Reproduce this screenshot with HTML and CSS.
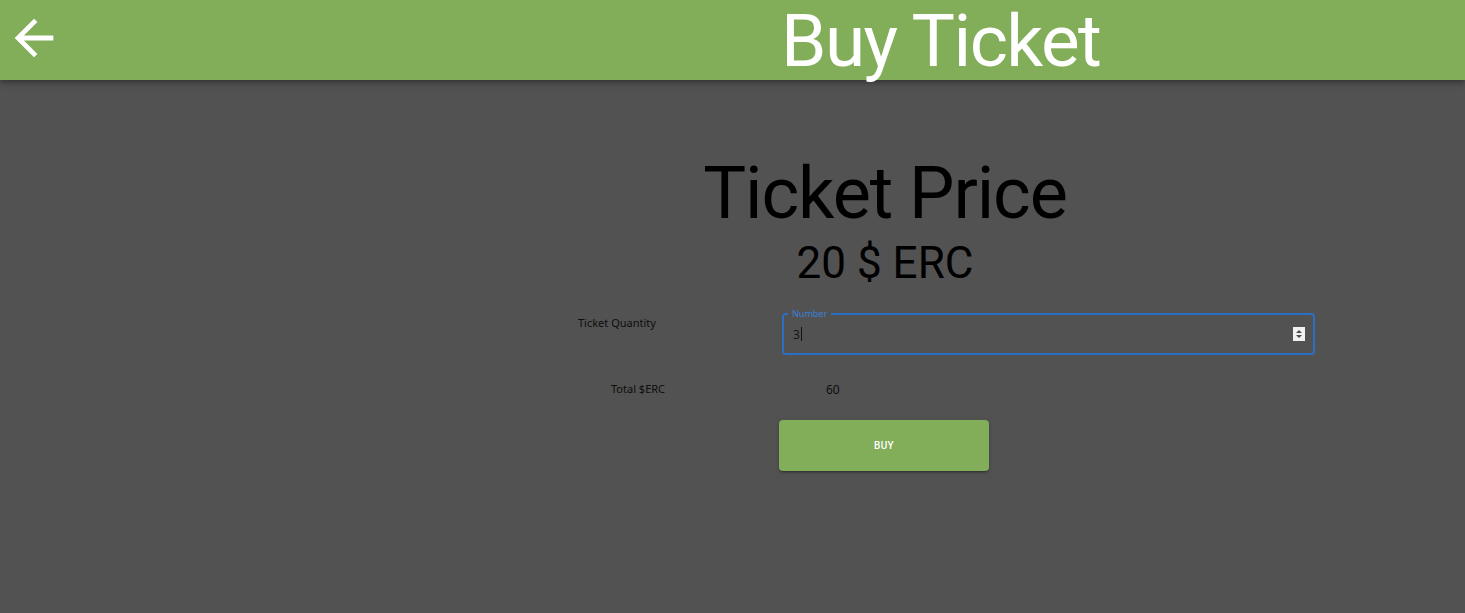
FILE: index.html
```html
<!DOCTYPE html>
<html lang="en">
<head>
<meta charset="utf-8">
<title>Buy Ticket</title>
<link rel="stylesheet" href="styles.css">
</head>
<body>
<header class="appbar">
  <button class="back" aria-label="Back">
    <svg viewBox="0 0 24 24" width="58" height="58"><path fill="#fff" d="M20 11H7.83l5.59-5.59L12 4l-8 8 8 8 1.41-1.41L7.83 13H20v-2z"/></svg>
  </button>
  <h1 class="title">Buy Ticket</h1>
</header>
<main class="content">
  <section class="price">
    <h2 class="price-label">Ticket Price</h2>
    <div class="price-value">20 $ ERC</div>
  </section>
  <section class="form">
    <div class="row row-qty">
      <div class="label label-qty">Ticket Quantity</div>
      <div class="field">
        <span class="field-label">Number</span>
        <span class="field-value">3<span class="caret"></span></span>
        <span class="spinner">
          <svg viewBox="0 0 12 14" width="12" height="14"><rect width="12" height="14" fill="#f1f1f1"/><path d="M3 6h6L6 3z M3 8h6l-3 3z" fill="#4a4a4a"/></svg>
        </span>
      </div>
    </div>
    <div class="row row-total">
      <div class="label label-total">Total $ERC</div>
      <div class="total-value">60</div>
    </div>
    <div class="row row-btn">
      <button class="buy">BUY</button>
    </div>
  </section>
</main>
</body>
</html>
```
FILE: styles.css
```css
* { box-sizing: border-box; }
html, body { margin: 0; padding: 0; }
body {
  background: #525252;
  font-family: Roboto, "Noto Sans", sans-serif;
  height: 613px;
  overflow: hidden;
}
.appbar {
  height: 80px;
  background: #82ad59;
  display: flex;
  align-items: flex-start;
  box-shadow: 0 2px 4px -1px rgba(0,0,0,0.2), 0 4px 5px 0 rgba(0,0,0,0.14), 0 1px 10px 0 rgba(0,0,0,0.12);
  position: relative;
  z-index: 1;
}
.back {
  background: none;
  border: 0;
  padding: 0;
  margin: 9px 0 0 5px;
  width: 58px;
  height: 58px;
  display: flex;
}
.title {
  margin: 1px 0 0 718px;
  font-weight: 400;
  font-size: 73px;
  line-height: 80px;
  height: 79px;
  color: #fff;
  letter-spacing: -1.6px;
  white-space: nowrap;
}
.content {
  display: flex;
  flex-direction: column;
}
.price {
  margin: 78px 0 0 560px;
  width: 650px;
  text-align: center;
  color: #000;
}
.price-label {
  margin: 0;
  font-weight: 400;
  font-size: 72px;
  line-height: 72px;
  letter-spacing: -1.1px;
}
.price-value {
  margin-top: 11px;
  font-size: 44px;
  line-height: 44px;
}
.form {
  margin: 28px 0 0 560px;
  font-family: "Noto Sans", "Open Sans", sans-serif;
  font-size: 11px;
  color: #0d0d0d;
}
.row { display: flex; }
.label { width: 222px; }
.label-qty { padding: 2px 0 0 18px; }
.field {
  position: relative;
  width: 533px;
  height: 42px;
  border: 2px solid #2a6fc4;
  border-radius: 4px;
  display: flex;
  align-items: center;
  padding: 0 8px 0 9px;
}
.field-label {
  position: absolute;
  left: 4px;
  top: -7px;
  padding: 0 4px;
  background: #525252;
  color: #3b7fd8;
  font-size: 9px;
  line-height: 11px;
}
.field-value {
  flex: 1;
  font-size: 12px;
  color: #151515;
  display: flex;
  align-items: center;
}
.caret {
  display: inline-block;
  width: 1px;
  height: 14px;
  background: #111;
  margin-left: 1px;
}
.spinner { display: flex; }
.row-total { margin-top: 26px; }
.label-total { padding-left: 51px; }
.total-value { padding-left: 44px; font-size: 12px; }
.row-btn { margin-top: 22px; padding-left: 219px; }
.buy {
  width: 210px;
  height: 51px;
  background: #82ad59;
  border: 0;
  border-radius: 4px;
  color: #fff;
  font-family: Roboto, sans-serif;
  font-weight: 500;
  font-size: 10px;
  letter-spacing: 0.3px;
  box-shadow: 0 3px 1px -2px rgba(0,0,0,0.2), 0 2px 2px 0 rgba(0,0,0,0.14), 0 1px 5px 0 rgba(0,0,0,0.12);
}
```
